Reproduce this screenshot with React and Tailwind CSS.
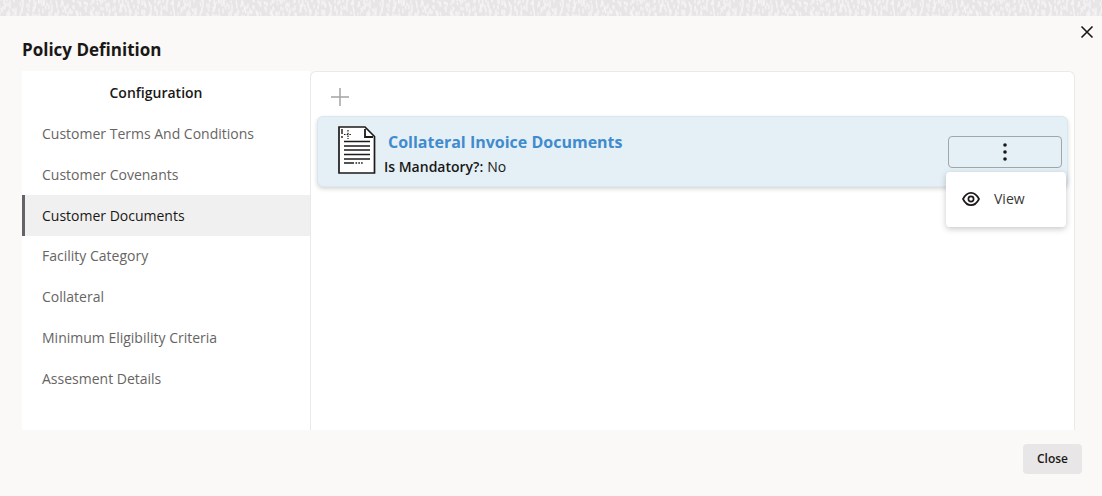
import React, { useState } from "react";

const sections = [
  "Customer Terms And Conditions",
  "Customer Covenants",
  "Customer Documents",
  "Facility Category",
  "Collateral",
  "Minimum Eligibility Criteria",
  "Assesment Details",
];

// short brush strokes for the woven banner behind the dialog
const strokes = Array.from({ length: 230 }, (_, i) => ({
  x: (i * 67 + ((i * i) % 13)) % 180,
  y: ((i * 11 + ((i * i * 3) % 7)) % 19) - 2,
  length: 2 + ((i * 5) % 3),
  lean: i % 4 === 0 ? 1 : 0,
}));

const Banner = () => (
  <svg className="block h-4 w-full shrink-0 bg-[#e7e5e6]" aria-hidden="true">
    <defs>
      <pattern id="weave" width="180" height="16" patternUnits="userSpaceOnUse">
        {strokes.map((s, i) => (
          <path
            key={i}
            d={`M${s.x} ${s.y}l${s.lean} ${s.length}`}
            stroke="#f6f5f5"
            strokeWidth="1.3"
            strokeLinecap="round"
          />
        ))}
      </pattern>
    </defs>
    <rect width="100%" height="100%" fill="url(#weave)" />
  </svg>
);

const DocumentIcon = () => (
  <svg width="38" height="48" viewBox="0 0 38 48" fill="none" stroke="#1d1b1a" aria-hidden="true">
    <path d="M1 1H27L36.500 10.500V47H1Z" fill="#fff" strokeWidth="1.700" />
    <path d="M27 3V11H35" strokeWidth="1.800" />
    <path d="M6 15.500H32M6 20H32M6 24H32M6 28.500H32M6 33H32M6 37H16" strokeWidth="1.500" />
    <path d="M17.500 37H25" strokeWidth="1.500" strokeDasharray="1.600 1.200" />
    <path d="M4 3V8M4 10V12" strokeWidth="1.400" />
    <path d="M10 4V13M6 8.500H14" strokeWidth="1.200" strokeDasharray="1.500 1.200" />
  </svg>
);

const EyeIcon = () => (
  <svg width="18" height="16" viewBox="0 0 18 16" fill="none" stroke="#1d1b1a" strokeWidth="1.700" aria-hidden="true">
    <path d="M1 8C3 4 5.500 1.800 9 1.800S15 4 17 8C15 12 12.500 14.200 9 14.200S3 12 1 8Z" strokeLinejoin="round" />
    <circle cx="9" cy="8" r="2.600" />
  </svg>
);

const App = () => {
  const [active, setActive] = useState("Customer Documents");
  const [menuOpen, setMenuOpen] = useState(true);

  return (
    <div className="flex min-h-screen flex-col bg-[#faf9f7] font-['Open_Sans',sans-serif] text-sm text-[#1a1816]">
      <Banner />

      {/* HEADER */}
      <header className="flex items-start justify-between pl-[22px] pr-2">
        <h1 className="pt-5 pb-[7px] text-[17px] leading-7 font-bold">Policy Definition</h1>
        <button type="button" aria-label="Close dialog" className="mt-[9px]">
          <svg width="14" height="14" viewBox="0 0 14 14" stroke="#1a1816" strokeWidth="1.600" aria-hidden="true">
            <path d="M1.500 1.500L12.500 12.500M12.500 1.500L1.500 12.500" />
          </svg>
        </button>
      </header>

      {/* BODY */}
      <main className="flex flex-1 pl-[22px] pr-[27px]">
        <nav aria-labelledby="configuration" className="w-72 shrink-0 bg-white">
          <h2 id="configuration" className="pr-5 pt-px text-center leading-[42px] font-semibold">
            Configuration
          </h2>
          <ul className="grid h-[285px] grid-rows-7">
            {sections.map((name) => (
              <li key={name} className="flex">
                <a
                  href="#"
                  aria-current={active === name ? "page" : undefined}
                  onClick={(e) => {
                    e.preventDefault();
                    setActive(name);
                  }}
                  className={
                    active === name
                      ? "flex flex-1 items-center border-l-3 border-[#65636a] bg-[#f0f0f0] pl-[17px] font-medium"
                      : "flex flex-1 items-center border-l-3 border-transparent pl-[17px] text-[#676563]"
                  }
                >
                  {name}
                </a>
              </li>
            ))}
          </ul>
        </nav>

        <section className="flex-1 rounded-t-md border border-b-0 border-[#ebe9e8] bg-white px-1.5">
          <button type="button" aria-label="Add document" className="mt-4 mb-2.5 ml-3.5 block">
            <svg width="18" height="18" viewBox="0 0 18 18" stroke="#a5a4a3" strokeWidth="1.500" aria-hidden="true">
              <path d="M9 0V18M0 9H18" />
            </svg>
          </button>

          <article className="flex h-[71px] items-center rounded-md border border-[#d9e7ee] bg-[#e4f0f6] pr-[5px] pl-5 shadow-[0_2px_4px_rgba(0,0,0,0.16)]">
            <div className="pb-1">
              <DocumentIcon />
            </div>
            <div className="flex-1 pt-0.5 pl-2">
              <h3 className="pl-1 text-base leading-7 font-bold text-[#408bce]">
                Collateral Invoice Documents
              </h3>
              <p className="flex gap-1 leading-[22px]">
                <span className="font-semibold">Is Mandatory?:</span>
                <span>No</span>
              </p>
            </div>

            <div className="relative">
              <button
                type="button"
                aria-label="Document actions"
                aria-expanded={menuOpen}
                onClick={() => setMenuOpen(!menuOpen)}
                className="flex h-8 w-[114px] items-center justify-center rounded border border-[#a1a6a9]"
              >
                <svg width="4" height="18" viewBox="0 0 4 18" fill="#1a1816" aria-hidden="true">
                  <circle cx="2" cy="2" r="1.800" />
                  <circle cx="2" cy="9" r="1.800" />
                  <circle cx="2" cy="16" r="1.800" />
                </svg>
              </button>

              {/* ACTIONS MENU */}
              {menuOpen && (
                <div
                  role="menu"
                  className="absolute top-9 -right-1 w-[120px] rounded bg-white py-1.5 shadow-[0_2px_6px_rgba(0,0,0,0.22)]"
                >
                  <button type="button" role="menuitem" className="flex h-[43px] w-full items-center gap-3.5 pl-4">
                    <EyeIcon />
                    <span className="text-[#3a3836]">View</span>
                  </button>
                </div>
              )}
            </div>
          </article>
        </section>
      </main>

      {/* FOOTER */}
      <footer className="flex justify-end pt-3.5 pr-5 pb-[22px]">
        <button type="button" className="h-[30px] rounded bg-[#e8e6e7] px-3.5 text-xs font-semibold">
          Close
        </button>
      </footer>
    </div>
  );
};

export default App;
